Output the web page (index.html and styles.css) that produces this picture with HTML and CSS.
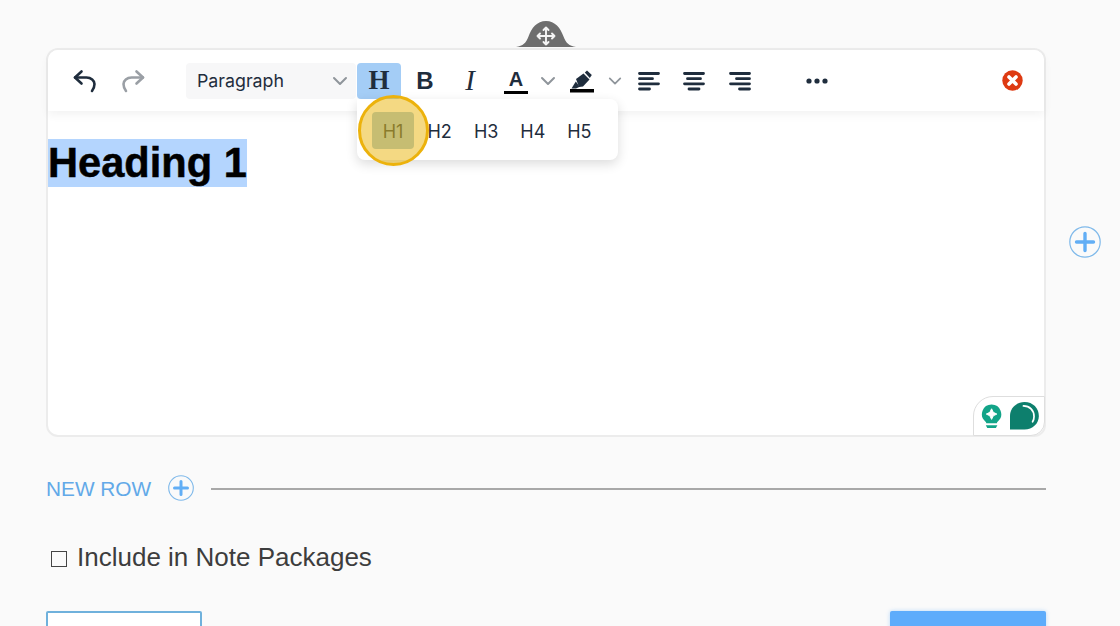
FILE: index.html
```html
<!DOCTYPE html>
<html lang="en">
<head>
<meta charset="utf-8">
<title>Editor</title>
<link rel="stylesheet" href="styles.css">
</head>
<body>
<main class="page">
  <section class="editor-row">
    <div class="card">
      <svg class="handle" width="60" height="28" viewBox="0 0 60 28">
        <path d="M0 27C7 26 10 23 12.500 16.500 15.500 8 21 1 30 1s14.500 7 17.500 15.500C50 23 53 26 60 27z" fill="#6e6e6e"/>
        <g fill="none" stroke="#f4f4f4" stroke-width="1.900" stroke-linecap="round" stroke-linejoin="round">
          <path d="M30 7.500v17M21.500 16h17M27.500 10 30 7.500l2.500 2.500M27.500 22 30 24.500l2.500-2.500M24 13.500 21.500 16l2.500 2.500M36 13.500l2.500 2.500-2.500 2.500"/>
        </g>
      </svg>
      <div class="toolbar">
        <button class="tb tb-hist">
          <svg width="24" height="24" viewBox="0 0 24 24" fill="none" stroke="#1f2d3d" stroke-width="2.600" stroke-linecap="round" stroke-linejoin="round"><path d="M8.500 2.500 2 8.500l6.500 6"/><path d="M2 8.500h11.500c4.500 0 8 3 8 6.500 0 3-1 5-2.500 7"/></svg>
        </button>
        <button class="tb tb-hist">
          <svg width="24" height="24" viewBox="0 0 24 24" fill="none" stroke="#9a9fa5" stroke-width="2.600" stroke-linecap="round" stroke-linejoin="round"><path d="M15.500 2.500 22 8.500l-6.500 6"/><path d="M22 8.500H10.500C6 8.500 2.500 11.500 2.500 15c0 3 1 5 2.500 7"/></svg>
        </button>
        <div class="select">
          <span>Paragraph</span>
          <svg class="chev" width="16" height="10" viewBox="0 0 16 10"><path d="M2 2l6 6 6-6"/></svg>
        </div>
        <button class="tb tb-h is-active">H</button>
        <button class="tb tb-b">B</button>
        <button class="tb tb-i">I</button>
        <button class="tb tb-a"><span class="a-letter">A</span></button>
        <span class="caret caret-a"><svg class="chev" width="16" height="10" viewBox="0 0 16 10"><path d="M2 2l6 6 6-6"/></svg></span>
        <button class="tb tb-mark">
          <svg width="26" height="24" viewBox="0 0 26 24"><path d="M7 10 14.500 4.500 20.500 10.500 14 17.500 10 18z" fill="#1f2d3d"/><path d="M15.800 3.500 18 1.500 22.800 6 20.800 9z" fill="#1f2d3d"/><path d="M6.800 12.500 10.800 17.800 7 19.500H2.500z" fill="#1f2d3d"/><rect x="1" y="20" width="24" height="3.500" fill="#000"/></svg>
        </button>
        <span class="caret caret-mark"><svg class="chev" width="16" height="10" viewBox="0 0 16 10"><path d="M2 2l6 6 6-6"/></svg></span>
        <button class="tb tb-align">
          <svg width="22" height="20" viewBox="0 0 22 20"><path d="M1.500 2.500h19M1.500 7.700h13M1.500 12.800h19M1.500 18h10"/></svg>
        </button>
        <button class="tb tb-align">
          <svg width="22" height="20" viewBox="0 0 22 20"><path d="M1.500 2.500h19M4.500 7.700h13M1.500 12.800h19M6 18h10"/></svg>
        </button>
        <button class="tb tb-align">
          <svg width="22" height="20" viewBox="0 0 22 20"><path d="M1.500 2.500h19M7.500 7.700h13M1.500 12.800h19M10.500 18h10"/></svg>
        </button>
        <button class="tb tb-more">
          <svg width="22" height="6" viewBox="0 0 22 6" fill="#1f2d3d"><circle cx="3" cy="3" r="2.600"/><circle cx="11" cy="3" r="2.600"/><circle cx="19" cy="3" r="2.600"/></svg>
        </button>
        <svg class="close" width="21" height="21" viewBox="0 0 21 21"><circle cx="10.500" cy="10.500" r="10.200" fill="#de3a12"/><path d="M7 7l7 7M14 7l-7 7" stroke="#fff" stroke-width="3.600" stroke-linecap="round"/></svg>
      </div>
      <div class="popup">
        <button class="h-opt h-active">H1</button>
        <button class="h-opt">H2</button>
        <button class="h-opt">H3</button>
        <button class="h-opt">H4</button>
        <button class="h-opt">H5</button>
      </div>
      <div class="spot"></div>
      <div class="content"><h1 class="heading"><span class="selected">Heading 1</span></h1></div>
      <div class="badge">
        <svg width="22" height="26" viewBox="0 0 22 26"><path d="M11 1a10 10 0 0 1 6.500 17.600c-.8.700-1 1.400-1 1.900h-11c0-.5-.2-1.200-1-1.900A10 10 0 0 1 11 1z" fill="#12a488"/><path d="M11 5.500l1.800 3.700 3.700 1.800-3.700 1.800L11 16.500l-1.800-3.700L5.500 11l3.700-1.800z" fill="#fff" stroke="#fff" stroke-linejoin="round"/><path d="M5 22.500h12l-1.500 3h-9z" fill="#12a488"/></svg>
        <svg width="30" height="30" viewBox="0 0 30 30"><path d="M0 29V15C0 7 6 .5 15 .5S30 7 30 15s-6.500 14-15 14z" fill="#0d7f6d"/><path d="M14 4.500c6.500 0 11 4.500 11 11 0 2-.5 4-1.500 5.500" fill="none" stroke="#fff" stroke-width="1.800" stroke-linecap="round"/></svg>
      </div>
    </div>
    <svg class="add add-side" width="32" height="32" viewBox="0 0 32 32"><circle cx="16" cy="16" r="15.200" fill="none" stroke="#7fb9ea" stroke-width="1.200"/><path d="M7.500 16h17M16 7.500v17" stroke="#62aef5" stroke-width="3.400" stroke-linecap="round"/></svg>
  </section>
  <section class="new-row">
    <span class="new-label">NEW ROW</span>
    <svg class="add add-row" width="26" height="26" viewBox="0 0 26 26"><circle cx="13" cy="13" r="12.300" fill="none" stroke="#7fb9ea" stroke-width="1.100"/><path d="M6.500 13h13M13 6.500v13" stroke="#62aef5" stroke-width="3" stroke-linecap="round"/></svg>
    <span class="rule"></span>
  </section>
  <label class="include"><span class="box"></span><span>Include in Note Packages</span></label>
  <div class="actions">
    <button class="btn btn-outline"></button>
    <button class="btn btn-solid"></button>
  </div>
</main>
</body>
</html>
```
FILE: styles.css
```css
* { box-sizing: border-box; }
html, body { margin: 0; height: 626px; overflow: hidden; background: #fafafa; }
body { font-family: "Liberation Sans", Arial, sans-serif; }
button { border: 0; background: none; padding: 0; margin: 0; font: inherit; color: inherit; }
.page { width: 1120px; height: 626px; padding: 48px 0 0 46px; overflow: hidden; }
.editor-row { display: flex; align-items: center; width: 1000px; }
.card { position: relative; flex: none; width: 1000px; height: 389px; background: #fff; border: 2px solid #ececec; border-radius: 12px; }
.handle { position: absolute; left: 468px; top: -30px; }
.add-side { flex: none; margin: 0 0 1px 23px; }
.toolbar { display: flex; align-items: center; height: 61px; padding: 0 21px 0 13px; background: #fff; border-radius: 10px 10px 0 0; box-shadow: 0 4px 10px rgba(0, 0, 0, .05); position: relative; color: #1f2d3d; }
.tb { flex: none; display: flex; align-items: center; justify-content: center; height: 36px; width: 46px; }
.tb-hist { width: 48px; }
.select { flex: none; display: flex; align-items: center; justify-content: space-between; width: 170px; height: 36px; margin: 0 1px 0 29px; padding: 0 8px 0 11px; background: #f7f7f8; border-radius: 4px; font-family: Inter, sans-serif; font-size: 17.800px; color: #1f2d3d; }
.chev { fill: none; stroke: #8f959b; stroke-width: 2; stroke-linecap: round; stroke-linejoin: round; display: block; }
.tb-h { width: 44px; background: #a4cdf6; border-radius: 4px; font-family: "Liberation Serif", serif; font-weight: 700; font-size: 27px; }
.tb-b { margin-left: 1px; font-family: "Liberation Sans", sans-serif; font-weight: 700; font-size: 24px; }
.tb-i { width: 44px; font-family: "Liberation Serif", serif; font-style: italic; font-size: 29px; }
.tb-a { width: 48px; }
.a-letter { display: block; width: 24px; height: 25px; border-bottom: 3.500px solid #000; font-weight: 700; font-size: 20px; line-height: 21px; text-align: center; margin-top: 2px; }
.caret { flex: none; display: flex; justify-content: center; }
.caret-a { width: 16px; }
.caret-mark { width: 14px; }
.tb-mark { width: 52px; }
.tb-align { width: 45.500px; }
.tb-align svg { fill: none; stroke: #1f2d3d; stroke-width: 2.800; stroke-linecap: round; display: block; }
.tb-mark + .caret + .tb-align { margin-left: 4px; }
.tb-more { width: 46px; margin-left: 31.500px; }
.close { flex: none; margin-left: auto; }
.popup { position: absolute; left: 309px; top: 49px; z-index: 2; display: flex; width: 261px; height: 61px; padding: 13px 0 0 15px; background: #fff; border-radius: 8px; border-top-left-radius: 0; box-shadow: 0 4px 12px rgba(0, 0, 0, .14); font-family: Inter, sans-serif; font-size: 18px; color: #1f2d3d; gap: 4.600px; }
.h-opt { flex: none; width: 42px; height: 37px; padding-top: 1px; border-radius: 4px; }
.h-active { background: #a2c7dc; color: #2a4350; }
.spot { position: absolute; left: 310px; top: 45px; z-index: 3; width: 71px; height: 71px; border-radius: 50%; border: 3px solid #ecb20c; background: rgba(234, 179, 8, .5); }
.content { padding-top: 28px; }
.heading { margin: 0; font-size: 41.600px; line-height: 48px; font-weight: 700; color: #000; -webkit-text-stroke: .5px #000; }
.selected { display: inline-block; background: #b4d5fe; }
.badge { position: absolute; right: -1px; bottom: -1px; display: flex; align-items: center; gap: 8px; width: 72px; height: 40px; padding: 0 5px 0 7px; background: #fff; border: 1px solid #dedede; border-radius: 20px 0 14px 0; }
.new-row { display: flex; align-items: center; width: 1000px; height: 28px; margin-top: 37px; }
.new-label { font-size: 20.800px; padding-top: 1px; color: #62a9e8; }
.add-row { flex: none; margin-left: 17px; }
.rule { flex: 1; height: 2px; margin: 2px 0 0 17px; background: #a8a8a8; }
.include { display: flex; align-items: center; height: 30px; margin-top: 40px; padding-left: 5px; font-size: 26px; color: #3d3d3d; }
.box { flex: none; width: 16px; height: 16px; margin: 3px 10px 0 0; border: 1.500px solid #444; }
.actions { display: flex; justify-content: space-between; width: 1000px; margin-top: 39px; }
.btn { width: 156px; height: 44px; border-radius: 2px; }
.btn-outline { background: #fff; border: 2px solid #6fb1dc; }
.btn-solid { background: #5eacfb; box-shadow: 0 0 4px rgba(94, 172, 251, .4); }
```
